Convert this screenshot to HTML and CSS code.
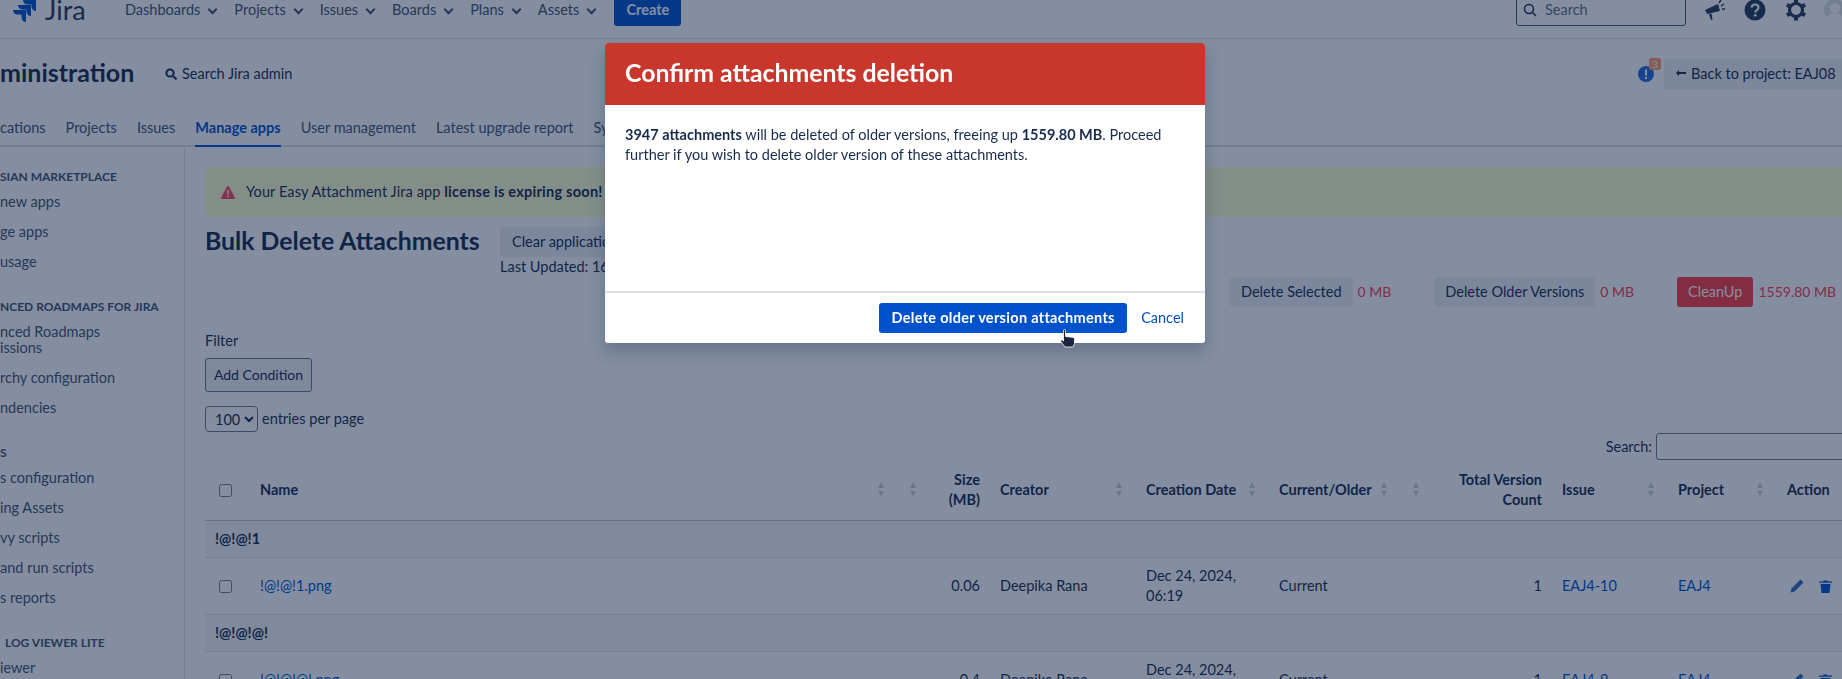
FILE: index.html
```html
<!DOCTYPE html>
<html lang="en">
<head>
    <meta charset="UTF-8">
    <meta name="viewport" content="width=device-width, initial-scale=1.0">
    <title>Bulk Delete Attachments</title>
    <link rel="stylesheet" href="styles.css">
</head>
<body>
    <div class="page">
        <header class="topbar">
            <div class="logo">
                <svg width="23" height="22" viewBox="0 0 23 22" fill="#0052cc"><path d="M10 0H23V11c-2.500 0-4.500-2-4.500-4.500V4.500H14.500C12 4.500 10 2.500 10 0z"/><path d="M5 5H18V16c-2.500 0-4.500-2-4.500-4.500V9.500H9.500C7 9.500 5 7.500 5 5z"/><path d="M0 10H13V22c-2.500 0-4.500-2-4.500-4.500V14.500H4.500C2 14.500 0 12.500 0 10z"/></svg>
                <span class="logo-text">Jira</span>
            </div>
            <nav class="mainnav">
                <a>Dashboards<i class="chev"></i></a>
                <a>Projects<i class="chev"></i></a>
                <a>Issues<i class="chev"></i></a>
                <a>Boards<i class="chev"></i></a>
                <a>Plans<i class="chev"></i></a>
                <a>Assets<i class="chev"></i></a>
            </nav>
            <button class="create">Create</button>
            <div class="topright">
                <div class="quicksearch">
                    <svg width="14" height="14" viewBox="0 0 14 14" fill="none" stroke="#172b4d" stroke-width="1.500"><circle cx="6" cy="6" r="4.500"/><path d="M9.500 9.500 13 13"/></svg>
                    <span>Search</span>
                </div>
                <svg width="20" height="20" viewBox="0 0 20 20" fill="#253858"><path d="M0 10 13 4l2 7-13 3z"/><path d="M4 14l2 6h1.500l-1-6.500z"/><path d="M14 3l2-3M16 6l3-2M17 9h3" stroke="#253858" stroke-width="1.500"/></svg>
                <svg width="22" height="22" viewBox="0 0 22 22"><circle cx="11" cy="11" r="10.500" fill="#253858"/><path d="M7.600 8.600C7.800 6.600 9.200 5.500 11 5.500c2 0 3.500 1.200 3.500 3 0 2.600-3.200 2.600-3.200 5" fill="none" stroke="#fff" stroke-width="2.200"/><circle cx="11.200" cy="16.300" r="1.400" fill="#fff"/></svg>
                <svg width="22" height="22" viewBox="0 0 22 22" fill="none" stroke="#253858"><circle cx="11" cy="11" r="6.500" stroke-width="3.200"/><path d="M11 .5v4M11 17.500v4M1.900 5.700l3.500 2M16.600 14.300l3.500 2M1.900 16.300l3.500-2M16.600 7.700l3.500-2" stroke-width="4"/></svg>
                <svg class="avatar" width="22" height="22" viewBox="0 0 22 22"><circle cx="11" cy="11" r="11" fill="#dfe1e6"/><circle cx="11" cy="9" r="5" fill="#fff"/><path d="M3 22c0-6 3-8 8-8s8 2 8 8z" fill="#fff"/></svg>
            </div>
        </header>

        <section class="adminbar">
            <h1 class="admin-title">ministration</h1>
            <div class="admin-search">
                <svg width="12" height="12" viewBox="0 0 12 12" fill="none" stroke="#172b4d" stroke-width="2"><circle cx="5" cy="5" r="3.600"/><path d="M8 8l3.500 3.500"/></svg>
                <span>Search Jira admin</span>
            </div>
            <div class="admin-right">
                <span class="notice">
                    <svg width="16" height="16" viewBox="0 0 16 16"><circle cx="8" cy="8" r="8" fill="#2068d8"/><rect x="7" y="3.500" width="2" height="6" fill="#fff"/><circle cx="8" cy="12" r="1.200" fill="#fff"/></svg>
                    <b class="notice-count">3</b>
                </span>
                <button class="btn back"><svg width="10" height="8" viewBox="0 0 10 8" fill="#172b4d"><path d="M0 3 3 0v2h7v2H3v2z"/></svg>Back to project: EAJ08</button>
            </div>
        </section>

        <nav class="tabs">
            <a>cations</a>
            <a>Projects</a>
            <a>Issues</a>
            <a class="active">Manage apps</a>
            <a>User management</a>
            <a>Latest upgrade report</a>
            <a>System</a>
        </nav>

        <div class="layout">
            <aside class="sidebar">
                <h4>SIAN MARKETPLACE</h4>
                <a>new apps</a>
                <a>ge apps</a>
                <a>usage</a>
                <h4>NCED ROADMAPS FOR JIRA</h4>
                <a class="two">nced Roadmaps<br>issions</a>
                <a>rchy configuration</a>
                <a>ndencies</a>
                <h4>S</h4>
                <a>s configuration</a>
                <a>ing Assets</a>
                <a>vy scripts</a>
                <a>and run scripts</a>
                <a>s reports</a>
                <h4 class="inset">LOG VIEWER LITE</h4>
                <a>iewer</a>
            </aside>

            <main class="content">
                <div class="banner">
                    <svg width="14" height="13" viewBox="0 0 14 13"><path d="M7 0a1 1 0 0 1 .9.500l6 11a1 1 0 0 1-.9 1.500H1a1 1 0 0 1-.9-1.500l6-11A1 1 0 0 1 7 0z" fill="#ff4560"/><rect x="6.200" y="4" width="1.600" height="4.500" fill="#fffed0"/><rect x="6.200" y="9.500" width="1.600" height="1.600" fill="#fffed0"/></svg>
                    <span>Your Easy Attachment Jira app <b>license is expiring soon!</b></span>
                </div>

                <div class="titlebar">
                    <h2>Bulk Delete Attachments</h2>
                    <div class="clearbox">
                        <button class="btn">Clear application</button>
                        <p>Last Updated: 16</p>
                    </div>
                    <div class="actions">
                        <div class="action"><button class="btn">Delete Selected</button><span class="size">0 MB</span></div>
                        <div class="action"><button class="btn">Delete Older Versions</button><span class="size">0 MB</span></div>
                        <div class="action"><button class="btn danger">CleanUp</button><span class="size">1559.80 MB</span></div>
                    </div>
                </div>

                <div class="filter">
                    <label>Filter</label>
                    <button class="btn outline">Add Condition</button>
                </div>

                <div class="entries">
                    <select><option>100</option></select>
                    <span>entries per page</span>
                </div>

                <div class="tablesearch">
                    <span>Search:</span>
                    <input type="text">
                </div>

                <table class="grid">
                    <colgroup>
                        <col class="c-check"><col class="c-name"><col class="c-blank"><col class="c-size"><col class="c-creator"><col class="c-date"><col class="c-kind"><col class="c-blank"><col class="c-total"><col class="c-issue"><col class="c-project"><col class="c-action">
                    </colgroup>
                    <thead>
                        <tr>
                            <th class="check"><input type="checkbox"></th>
                            <th class="sort near">Name</th>
                            <th class="sort near"></th>
                            <th class="num">Size (MB)</th>
                            <th class="sort">Creator</th>
                            <th class="sort">Creation Date</th>
                            <th class="sort near">Current/Older</th>
                            <th class="sort near"></th>
                            <th class="num">Total Version Count</th>
                            <th class="sort">Issue</th>
                            <th class="sort">Project</th>
                            <th>Action</th>
                        </tr>
                    </thead>
                    <tbody>
                        <tr class="group"><td colspan="12">!@!@!1</td></tr>
                        <tr class="row">
                            <td class="check"><input type="checkbox"></td>
                            <td><a>!@!@!1.png</a></td>
                            <td></td>
                            <td class="num">0.06</td>
                            <td>Deepika Rana</td>
                            <td>Dec 24, 2024, 06:19</td>
                            <td>Current</td>
                            <td></td>
                            <td class="num">1</td>
                            <td><a>EAJ4-10</a></td>
                            <td><a>EAJ4</a></td>
                            <td>
                                <div class="row-actions">
                                    <svg width="14" height="14" viewBox="0 0 14 14" fill="#3568b8"><path d="M10.500 .5 13.500 3.500 4.500 12.500 .5 13.500 1.500 9.500z"/></svg>
                                    <svg width="13" height="13" viewBox="0 0 13 13" fill="#0052cc"><path d="M0 1.500h4.500V.5h4v1H13v1.300H0zM1.500 4h10L10.500 13h-8z"/></svg>
                                </div>
                            </td>
                        </tr>
                        <tr class="group"><td colspan="12">!@!@!@!</td></tr>
                        <tr class="row">
                            <td class="check"><input type="checkbox"></td>
                            <td><a>!@!@!@!.png</a></td>
                            <td></td>
                            <td class="num">0.4</td>
                            <td>Deepika Rana</td>
                            <td>Dec 24, 2024, 06:19</td>
                            <td>Current</td>
                            <td></td>
                            <td class="num">1</td>
                            <td><a>EAJ4-9</a></td>
                            <td><a>EAJ4</a></td>
                            <td>
                                <div class="row-actions">
                                    <svg width="14" height="14" viewBox="0 0 14 14" fill="#3568b8"><path d="M10.500 .5 13.500 3.500 4.500 12.500 .5 13.500 1.500 9.500z"/></svg>
                                    <svg width="13" height="13" viewBox="0 0 13 13" fill="#0052cc"><path d="M0 1.500h4.500V.5h4v1H13v1.300H0zM1.500 4h10L10.500 13h-8z"/></svg>
                                </div>
                            </td>
                        </tr>
                    </tbody>
                </table>
            </main>
        </div>
    </div>

    <div class="blanket"></div>

    <div class="dialog">
        <div class="dialog-head">Confirm attachments deletion</div>
        <div class="dialog-body">
            <b>3947 attachments</b> will be deleted of older versions, freeing up <b>1559.80 MB</b>. Proceed further if you wish to delete older version of these attachments.
        </div>
        <div class="dialog-foot">
            <button class="primary">Delete older version attachments</button>
            <a class="cancel">Cancel</a>
        </div>
        <svg class="cursor" width="16" height="19" viewBox="0 0 16 19"><path d="M3.500 1.500a1 1 0 0 1 2 0V7.500l7 .8c1.500.2 2 1 2 2.200v4l-1.500 3.500H5L.8 12.500c-.7-1 .4-2 1.400-1.400l1.300 1z" fill="#1d2440" stroke="#fff" stroke-width=".8"/></svg>
    </div>
</body>
</html>
```

FILE: styles.css
```css
* {
    box-sizing: border-box;
}
html, body {
    margin: 0;
    height: 679px;
    overflow: hidden;
}
body {
    font-family: "Lato", "Noto Sans", sans-serif;
    font-size: 14.5px;
    line-height: 20px;
    color: #172b4d;
    background: #fff;
}
a {
    color: inherit;
    text-decoration: none;
}
button, select, input {
    font: inherit;
}
button {
    border: none;
}

/* the shot is scrolled a little, so the page starts above the window */
.page {
    width: 1860px;
    margin-top: -7px;
}

/* top bar */
.topbar {
    height: 46px;
    border-bottom: 1px solid #dfe1e6;
    display: flex;
    align-items: flex-start;
    padding: 0 14px 0 13px;
}
.logo {
    width: 112px;
    height: 32px;
    padding-top: 7px;
    display: flex;
    gap: 9px;
}
.logo-text {
    font-size: 27px;
    line-height: 20px;
    color: #253858;
}
.mainnav {
    display: flex;
    gap: 17px;
    line-height: 34px;
    color: #42526e;
}
.chev {
    display: inline-block;
    width: 7px;
    height: 7px;
    margin: 0 1px 2px 9px;
    border-right: 2px solid #42526e;
    border-bottom: 2px solid #42526e;
    transform: rotate(45deg);
}
.create {
    margin-left: 18px;
    width: 67px;
    height: 33px;
    border-radius: 3px;
    background: #0052cc;
    color: #fff;
    font-weight: 700;
    padding: 0;
}
.topright {
    margin-left: auto;
    height: 34px;
    display: flex;
    align-items: center;
    gap: 19px;
}
.quicksearch {
    width: 170px;
    height: 33px;
    align-self: flex-start;
    border: 1px solid #42526e;
    border-radius: 3px;
    display: flex;
    align-items: center;
    gap: 8px;
    padding-left: 6px;
    color: #5e6c84;
}
.avatar {
    margin-left: -2px;
}

/* administration row */
.adminbar {
    height: 69px;
    display: flex;
    align-items: center;
}
.admin-title {
    margin: 0;
    width: 165px;
    padding-bottom: 3px;
    font-size: 25px;
    font-weight: 700;
}
.admin-search {
    display: flex;
    align-items: center;
    gap: 5px;
}
.admin-right {
    margin-left: auto;
    display: flex;
    align-items: center;
    gap: 10px;
}
.notice {
    position: relative;
    display: flex;
}
.notice-count {
    position: absolute;
    top: -8px;
    right: -7px;
    width: 12px;
    height: 12px;
    border-radius: 2px;
    background: #ff9a6e;
    color: #fff;
    font-size: 10px;
    line-height: 12px;
    text-align: center;
    font-weight: 400;
}
.btn {
    height: 30px;
    padding: 0 12px;
    border-radius: 3px;
    background: #f0f1f4;
    color: #172b4d;
    white-space: nowrap;
}
.back {
    width: 196px;
    display: flex;
    align-items: center;
    gap: 5px;
}

/* admin tabs */
.tabs {
    height: 39px;
    display: flex;
    gap: 20px;
    border-bottom: 2px solid #dfe1e6;
    color: #42526e;
    padding-top: 10px;
}
.tabs a {
    height: 29px;
}
.tabs .active {
    color: #0052cc;
    border-bottom: 2px solid #0052cc;
    font-weight: 700;
}

/* page body */
.layout {
    display: flex;
}
.sidebar {
    width: 185px;
    height: 540px;
    flex-shrink: 0;
    border-right: 1px solid #dfe1e6;
    padding-top: 20px;
    color: #42526e;
    overflow: hidden;
}
.sidebar h4 {
    margin: 20px 0 0;
    font-size: 12px;
    font-weight: 700;
    line-height: 20px;
    white-space: nowrap;
}
.sidebar h4:first-child {
    margin-top: 0;
}
.sidebar .inset {
    padding-left: 5px;
}
.sidebar a {
    display: block;
    padding: 5px 0;
}
.sidebar .two {
    padding: 7px 0;
    line-height: 16px;
}
.content {
    width: 1675px;
    padding-left: 20px;
}
.banner {
    margin-top: 20px;
    height: 50px;
    padding-left: 16px;
    display: flex;
    align-items: center;
    gap: 11px;
    border-radius: 3px;
    background: #fffed0;
    letter-spacing: .1px;
}
.banner b {
    letter-spacing: .25px;
}
.titlebar {
    margin-top: 10px;
    display: flex;
    align-items: flex-start;
}
.titlebar h2 {
    margin: 0;
    width: 295px;
    font-size: 24.8px;
    line-height: 28px;
    font-weight: 700;
}
.clearbox {
    width: 730px;
}
.clearbox p {
    margin: 0;
}
.actions {
    margin-top: 50px;
    display: flex;
    gap: 43px;
    font-size: 14px;
}
.action {
    display: flex;
    align-items: center;
    gap: 5px;
}
.action .btn {
    padding: 0 11px;
    font-size: 14.5px;
}
.size {
    color: #ff3a4a;
}
.btn.danger {
    background: #ff3a40;
    color: #fff;
}
.filter {
    margin-top: 24px;
}
.filter label {
    display: block;
}
.btn.outline {
    display: block;
    margin-top: 7px;
    width: 107px;
    height: 34px;
    padding: 0;
    font-size: 14px;
    background: #f4f5f7;
    border: 1px solid #6b778c;
}
.entries {
    margin-top: 14px;
    height: 26px;
    display: flex;
    align-items: center;
    gap: 4px;
}
.entries select {
    width: 53px;
    height: 26px;
    padding-left: 5px;
    background: #fff;
    color: #172b4d;
    border: 1px solid #6b778c;
    border-radius: 4px;
}
.tablesearch {
    margin-top: 1px;
    display: flex;
    justify-content: flex-end;
    align-items: center;
    gap: 4px;
}
.tablesearch input {
    width: 204px;
    height: 27px;
    background: #fff;
    border: 1px solid #6b778c;
    border-radius: 3px;
}

/* table */
.grid {
    width: 100%;
    table-layout: fixed;
    border-collapse: separate;
    border-spacing: 0;
}
.c-check { width: 45px; }
.c-name { width: 640px; }
.c-blank { width: 32px; }
.c-size { width: 68px; }
.c-creator { width: 146px; }
.c-date { width: 133px; }
.c-kind { width: 124px; }
.c-total { width: 127px; }
.c-issue { width: 116px; }
.c-project { width: 109px; }
.c-action { width: 83px; }
.grid th, .grid td {
    padding: 0 10px;
    text-align: left;
    vertical-align: middle;
}
.grid th {
    height: 61px;
    border-bottom: 1px solid #c1c7d0;
    font-weight: 700;
}
.grid td {
    border-bottom: 1px solid #dfe1e6;
}
.grid .num {
    text-align: right;
}
.grid .check {
    padding-left: 14px;
}
.check input {
    display: block;
    margin: 0;
}
.group td {
    height: 37px;
    font-weight: 700;
    background: #f6f6f6;
}
.row td {
    height: 57px;
}
.row a {
    color: #0052cc;
}
.row-actions {
    display: flex;
    align-items: center;
    gap: 15px;
    padding-left: 3px;
}
.sort {
    position: relative;
}
.sort::before, .sort::after {
    content: "";
    position: absolute;
    right: 14px;
    top: 50%;
    border-left: 3.500px solid transparent;
    border-right: 3.500px solid transparent;
}
.sort.near::before, .sort.near::after {
    right: 6px;
}
.sort::before {
    margin-top: -8px;
    border-bottom: 6px solid #c9ced8;
}
.sort::after {
    margin-top: 1px;
    border-top: 6px solid #c9ced8;
}

/* dialog over the blanket */
.blanket {
    position: fixed;
    inset: 0;
    background: rgba(9, 30, 66, .5);
}
.dialog {
    position: fixed;
    left: 605px;
    top: 43px;
    width: 600px;
    height: 300px;
    display: flex;
    flex-direction: column;
    background: #fff;
    border-radius: 3px;
    box-shadow: 0 8px 16px rgba(9, 30, 66, .25);
}
.dialog-head {
    height: 62px;
    flex-shrink: 0;
    padding: 0 20px 3px;
    display: flex;
    align-items: center;
    border-radius: 3px 3px 0 0;
    background: #c9372c;
    color: #fff;
    font-size: 24.8px;
    font-weight: 700;
}
.dialog-body {
    flex: 1;
    padding: 20px;
}
.dialog-foot {
    height: 52px;
    flex-shrink: 0;
    border-top: 2px solid #dfe1e6;
    display: flex;
    justify-content: flex-end;
    align-items: center;
    gap: 14px;
    padding-right: 21px;
}
.primary {
    width: 248px;
    height: 30px;
    padding: 0;
    border-radius: 3px;
    background: #0052cc;
    color: #fff;
    font-weight: 700;
    letter-spacing: .3px;
}
.cancel {
    color: #0052cc;
}
.cursor {
    position: absolute;
    left: 455px;
    top: 286px;
}
```
